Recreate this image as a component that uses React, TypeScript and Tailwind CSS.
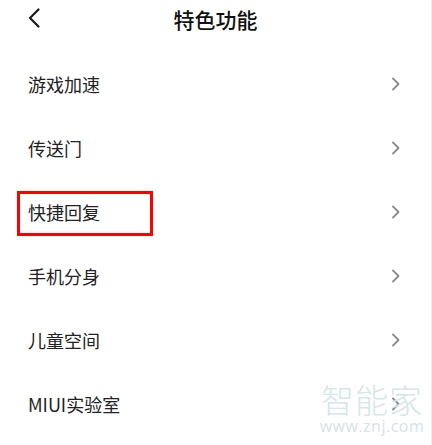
import React from 'react';

const ITEMS = ['游戏加速', '传送门', '快捷回复', '手机分身', '儿童空间', 'MIUI实验室'];

const FONT = { fontFamily: '"Noto Sans CJK SC", "Noto Sans", sans-serif' };

function Chevron() {
  return (
    <svg width="10" height="14" viewBox="0 0 10 14" className="text-[#8a8a8a]">
      <path d="M2 1.5 L7.5 7 L2 12.5" fill="none" stroke="currentColor" strokeWidth="1.8" strokeLinecap="round" strokeLinejoin="round" />
    </svg>
  );
}

export default function App() {
  return (
    <div className="relative h-[445px] w-[432px] overflow-hidden border-r border-[#ececec] bg-white" style={FONT}>
      <header className="relative flex h-[38px] items-center justify-center">
        <svg width="14" height="20" viewBox="0 0 14 20" className="absolute left-[27px] top-[8px] text-[#1a1a1a]">
          <path d="M11.5 1.5 L3 10 L11.5 18.5" fill="none" stroke="currentColor" strokeWidth="2.2" strokeLinecap="round" strokeLinejoin="round" />
        </svg>
        <h1 className="text-[21px] font-medium leading-none text-[#111]">特色功能</h1>
      </header>

      <ul className="mt-[14px]">
        {ITEMS.map((label) => (
          <li key={label} className="relative flex h-[64px] items-center justify-between pl-[28px] pr-[30px]">
            <span className="text-[18px] leading-none text-[#222]">{label}</span>
            <Chevron />
            {label === '快捷回复' && (
              <div className="pointer-events-none absolute left-[17px] top-[11px] h-[45px] w-[136px] border-[3px] border-[#ff0000]" />
            )}
          </li>
        ))}
      </ul>

      <div className="pointer-events-none absolute left-[318px] top-[382px] flex w-[108px] flex-col items-center">
        <div className="h-[34px] text-[33px] leading-[34px] tracking-[1px] text-[#d4e7e9]" style={{ fontFamily: '"Noto Sans CJK SC", sans-serif', fontWeight: 300 }}>
          智能家
        </div>
        <div className="mt-[2px] h-[17px] text-[16px] leading-[17px] tracking-[0.5px] text-[#d2e4e7]" style={{ fontFamily: '"Open Sans", sans-serif' }}>
          www.znj.com
        </div>
      </div>
    </div>
  );
}
